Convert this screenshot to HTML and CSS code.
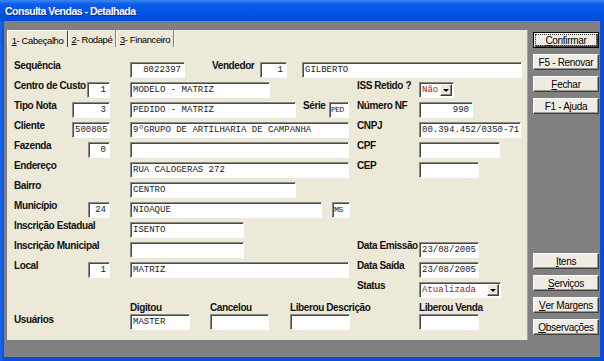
FILE: index.html
```html
<!DOCTYPE html>
<html lang="pt-BR">
<head>
  <meta charset="UTF-8"/>
  <title>Consulta Vendas - Detalhada</title>
  <link rel="stylesheet" href="styles.css">
</head>
<body>
<div class="window">
  <div class="titlebar">Consulta Vendas - Detalhada</div>

  <div class="client">
    <div class="panel">
      <div class="tabs">
        <div class="tab on t1"><u>1</u> - Cabeçalho</div>
        <div class="tab t2"><u>2</u> - Rodapé</div>
        <div class="tab t3"><u>3</u> - Financeiro</div>
      </div>

      <div class="sheet">
        <div class="row">
          <div class="cl"><span class="lbl">Sequência</span></div>
          <div class="fld num w55">8022397</div>
          <span class="lbl ml27 w48">Vendedor</span>
          <div class="fld num w27">1</div>
          <div class="fld ml15 w220">GILBERTO</div>
        </div>

        <div class="row">
          <div class="cl"><span class="lbl">Centro de Custo</span><div class="fld num code w23">1</div></div>
          <div class="cm"><div class="fld w140">MODELO - MATRIZ</div></div>
          <div class="cr"><span class="lbl">ISS Retido ?</span>
            <div class="fld sel w35"><span class="red">Não</span><span class="drop"></span></div>
          </div>
        </div>

        <div class="row">
          <div class="cl"><span class="lbl">Tipo Nota</span><div class="fld num code w38">3</div></div>
          <div class="cm">
            <div class="fld w166">PEDIDO - MATRIZ</div>
            <span class="lbl ml7 w26">Série</span>
            <div class="fld tiny w20">PED</div>
          </div>
          <div class="cr"><span class="lbl">Número NF</span><div class="fld num w54">990</div></div>
        </div>

        <div class="row">
          <div class="cl"><span class="lbl">Cliente</span><div class="fld num code w38">500805</div></div>
          <div class="cm"><div class="fld w219">9ºGRUPO DE ARTILHARIA DE CAMPANHA</div></div>
          <div class="cr"><span class="lbl">CNPJ</span><div class="fld w102">00.394.452/0350-71</div></div>
        </div>

        <div class="row">
          <div class="cl"><span class="lbl">Fazenda</span><div class="fld num code w22">0</div></div>
          <div class="cm"><div class="fld w219"></div></div>
          <div class="cr"><span class="lbl">CPF</span><div class="fld w81"></div></div>
        </div>

        <div class="row">
          <div class="cl"><span class="lbl">Endereço</span></div>
          <div class="cm"><div class="fld w219">RUA CALOGERAS 272</div></div>
          <div class="cr"><span class="lbl">CEP</span><div class="fld w60"></div></div>
        </div>

        <div class="row">
          <div class="cl"><span class="lbl">Bairro</span></div>
          <div class="cm"><div class="fld w166">CENTRO</div></div>
        </div>

        <div class="row">
          <div class="cl"><span class="lbl">Município</span><div class="fld num code w22">24</div></div>
          <div class="cm">
            <div class="fld w192">NIOAQUE</div>
            <div class="fld tiny ml10 w18">MS</div>
          </div>
        </div>

        <div class="row">
          <div class="cl"><span class="lbl">Inscrição Estadual</span></div>
          <div class="cm"><div class="fld w114">ISENTO</div></div>
        </div>

        <div class="row">
          <div class="cl"><span class="lbl">Inscrição Municipal</span></div>
          <div class="cm"><div class="fld w114"></div></div>
          <div class="cr"><span class="lbl">Data Emissão</span><div class="fld w60">23/08/2005</div></div>
        </div>

        <div class="row">
          <div class="cl"><span class="lbl">Local</span><div class="fld num code w22">1</div></div>
          <div class="cm"><div class="fld w219">MATRIZ</div></div>
          <div class="cr"><span class="lbl">Data Saída</span><div class="fld w60">23/08/2005</div></div>
        </div>

        <div class="row">
          <div class="cl"></div>
          <div class="cm"></div>
          <div class="cr"><span class="lbl">Status</span>
            <div class="fld sel w82"><span class="red">Atualizada</span><span class="drop"></span></div>
          </div>
        </div>

        <div class="row users">
          <div class="cl"><span class="lbl low">Usuários</span></div>
          <div class="grp w60"><span class="lbl">Digitou</span><div class="fld">MASTER</div></div>
          <div class="grp ml20 w59"><span class="lbl">Cancelou</span><div class="fld"></div></div>
          <div class="grp ml21 w60"><span class="lbl">Liberou Descrição</span><div class="fld"></div></div>
          <div class="grp ml69 w60"><span class="lbl">Liberou Venda</span><div class="fld"></div></div>
        </div>
      </div>
    </div>

    <div class="side">
      <div class="group">
        <div class="btn default"><span><u>C</u>onfirmar</span></div>
        <div class="btn">F5 - Renovar</div>
        <div class="btn"><u>F</u>echar</div>
        <div class="btn">F1 - Ajuda</div>
      </div>
      <div class="group">
        <div class="btn"><u>I</u>tens</div>
        <div class="btn"><u>S</u>erviços</div>
        <div class="btn"><u>V</u>er Margens</div>
        <div class="btn"><u>O</u>bservações</div>
      </div>
    </div>
  </div>
</div>
</body>
</html>
```

FILE: styles.css
```css
*{box-sizing:border-box;}
body{margin:0;background:#0a55e0;font-family:"Liberation Sans",Arial,sans-serif;}
.window{width:604px;height:361px;display:flex;flex-direction:column;background:linear-gradient(90deg,#1c66ee,#0a4fdc 4px,#0a4fdc 600px,#0842c8);}
.titlebar{height:21px;flex:none;padding:1px 0 0 5px;display:flex;align-items:center;color:#fff;font-weight:bold;font-size:10.5px;letter-spacing:-.5px;text-shadow:1px 1px #0a2a9a;background:linear-gradient(#3d86f6 0,#0b5ee8 4px,#0056e6 55%,#004bd6 100%);}
.client{flex:1;margin:0 4px 4px;background:#808080;display:flex;gap:5px;padding:9px 1px 17px 3px;}

.panel{width:521px;background:#ece9d8;display:flex;flex-direction:column;border-right:1px solid #a9a79c;}
.tabs{display:flex;height:17px;flex:none;}
.tab{height:17px;display:flex;align-items:center;justify-content:center;padding-top:2px;font-size:9.5px;letter-spacing:-.4px;color:#000;border-right:1px solid #808080;box-shadow:1px 0 #fff;white-space:nowrap;}
.tab.on{border-top:1px solid #fff;border-left:1px solid #fff;border-right-color:#404040;}
.t1{width:61px;}
.t2{width:47px;margin-left:1px;}
.t3{width:57px;margin-left:1px;}
.sheet{flex:1;padding:15px 0 0 7px;}

.row{display:flex;align-items:flex-start;height:20px;}
.row.users{height:auto;}
.cl{width:116px;display:flex;align-items:flex-start;flex:none;}
.cm{width:227px;display:flex;align-items:flex-start;flex:none;}
.cr{display:flex;align-items:flex-start;}
.cr .lbl{width:62px;}
.code{margin-left:auto;margin-right:20px;}

.lbl{font-weight:bold;font-size:10px;line-height:12px;letter-spacing:-.4px;color:#111;margin-top:-2px;white-space:nowrap;}
.lbl.low{margin-top:12px;}

.fld{height:16px;flex:none;background:#fff;border-style:solid;border-width:1px;border-color:#8a8a8a #fff #fff #8a8a8a;box-shadow:inset 1px 1px #4a4a4a;font-family:"Liberation Mono","Courier New",monospace;font-size:9px;line-height:14px;color:#1a1a1a;padding:0 1px 0 2px;white-space:nowrap;overflow:hidden;}
.num{text-align:right;padding:0 3px 0 2px;}
.tiny{padding:0 0 0 1px;font-size:8px;letter-spacing:-.6px;}
.sel{display:flex;justify-content:space-between;padding-right:1px;}
.red{color:#a01818;}
.drop{width:12px;height:12px;margin-top:1px;background:#ece9d8;border:1px solid;border-color:#fff #404040 #404040 #fff;box-shadow:inset -1px -1px #808080;display:flex;align-items:center;justify-content:center;}
.drop::after{content:"";border-left:3px solid transparent;border-right:3px solid transparent;border-top:3px solid #000;margin-left:-1px;}

.grp{display:flex;flex-direction:column;flex:none;}
.grp .lbl{margin:0;height:12px;}
.grp .fld{width:100%;}

.w18{width:18px;} .w20{width:20px;} .w22{width:22px;} .w23{width:23px;} .w26{width:26px;} .w27{width:27px;}
.w35{width:35px;} .w38{width:38px;} .w48{width:48px;} .w54{width:54px;} .w55{width:55px;} .w59{width:59px;}
.w60{width:60px;} .w81{width:81px;} .w82{width:82px;} .w102{width:102px;} .w114{width:114px;}
.w140{width:140px;} .w166{width:166px;} .w192{width:192px;} .w219{width:219px;} .w220{width:220px;}
.ml7{margin-left:7px;} .ml10{margin-left:10px;} .ml15{margin-left:15px;} .ml20{margin-left:20px;}
.ml21{margin-left:21px;} .ml27{margin-left:27px;} .ml69{margin-left:69px;}

.side{width:66px;display:flex;flex-direction:column;justify-content:space-between;margin:2px 0 5px;}
.group{display:flex;flex-direction:column;gap:6px;}
.btn{height:16px;display:flex;align-items:center;justify-content:center;background:#efede3;border:1px solid;border-color:#fff #404040 #404040 #fff;box-shadow:inset -1px -1px #9a988e;font-size:10px;letter-spacing:-.3px;color:#000;white-space:nowrap;}
.btn.default{border:1px solid #000;box-shadow:inset 1px 1px #fff,inset -1px -1px #404040,inset -2px -2px #9a988e;}
.btn.default span{display:flex;align-items:center;justify-content:center;width:60px;height:10px;outline:1px dotted #333;}
```
